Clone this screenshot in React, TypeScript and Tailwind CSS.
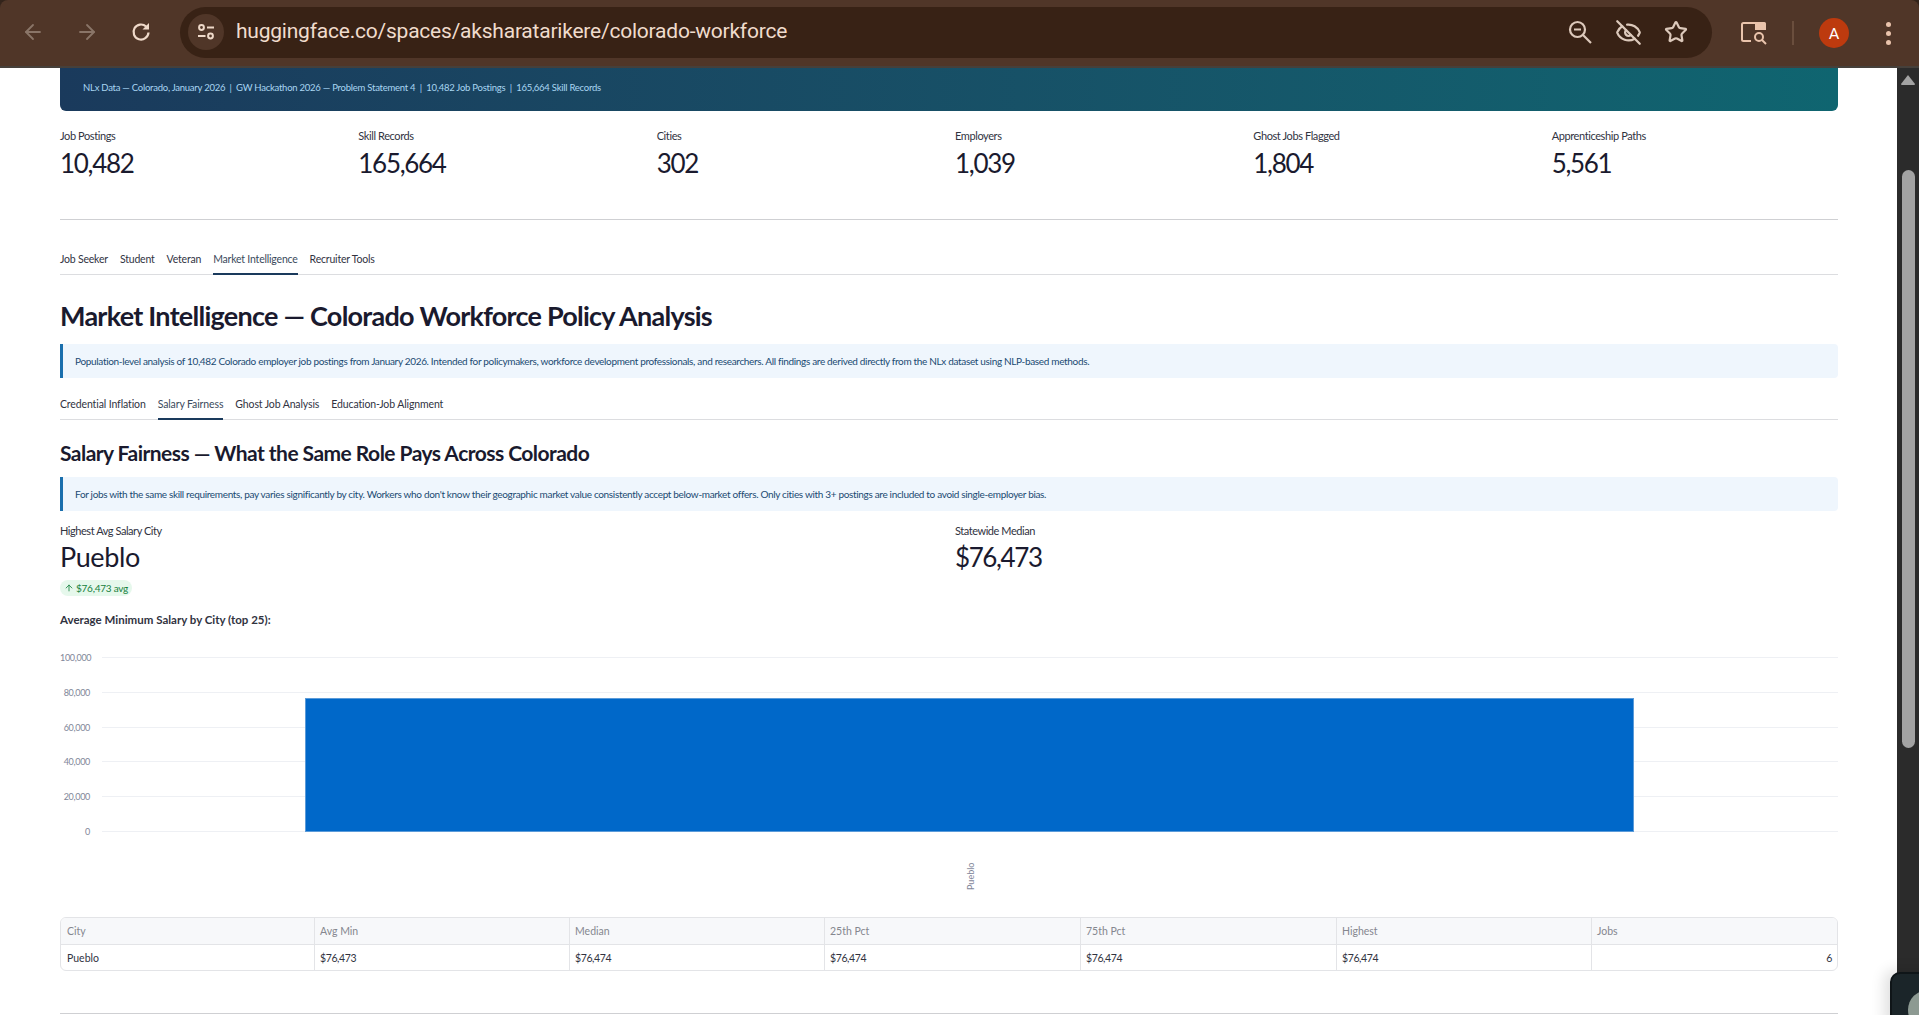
import { ArrowLeft, ArrowRight, EyeOff, Star, ArrowUp } from "lucide-react";

const stats = [
  ["Job Postings", "10,482"],
  ["Skill Records", "165,664"],
  ["Cities", "302"],
  ["Employers", "1,039"],
  ["Ghost Jobs Flagged", "1,804"],
  ["Apprenticeship Paths", "5,561"],
];
const ticks = ["100,000", "80,000", "60,000", "40,000", "20,000", "0"];
const heads = ["City", "Avg Min", "Median", "25th Pct", "75th Pct", "Highest", "Jobs"];
const cells = ["Pueblo", "$76,473", "$76,474", "$76,474", "$76,474", "$76,474", "6"];

function Tabs({ items, active, tracking }: { items: string[]; active: number; tracking: string }) {
  return (
    <div className="flex gap-[12px] border-b border-[#dcdde0] h-[33px]">
      {items.map((t, i) => (
        <div
          key={t}
          className={
            "h-[33px] flex items-center text-[10.5px] " + tracking + " " +
            (i === active ? "border-b-2 border-[#1a3a5c] text-[#3b4a5c] pt-[4px]" : "text-[#31333f] pt-[2px]")
          }
        >
          {t}
        </div>
      ))}
    </div>
  );
}

function Info({ children, className }: { children: string; className: string }) {
  return (
    <div className={"h-[34px] flex items-center bg-[#eff6fd] border-l-[3px] border-[#1a6fad] rounded-r-[4px] pl-[12px] text-[10px] tracking-[-0.33px] text-[#1a4a72] " + className}>
      {children}
    </div>
  );
}

export default function App() {
  return (
    <div className="h-[1015px] w-full overflow-hidden bg-white flex flex-col relative" style={{ fontFamily: '"Lato", sans-serif' }}>
      <div className="bg-[#33241b] shrink-0">
        <header className="h-[68px] bg-[#503628] border-b-2 border-[#46403b] flex items-center rounded-t-[8px]">
          <div className="w-[180px] pl-[21px] flex items-center gap-[30px] pb-[2px]">
            <ArrowLeft size={24} strokeWidth={1.8} className="text-[#8a7568]" />
            <ArrowRight size={24} strokeWidth={1.8} className="text-[#8a7568]" />
            <svg width="24" height="24" viewBox="0 0 24 24" fill="none">
              <path d="M19.5 12.5a7.5 7.5 0 1 1-2.4-6" stroke="#efd9c9" strokeWidth="2.2" />
              <path d="M20 3v6.5h-6.5z" fill="#efd9c9" />
            </svg>
          </div>
          <div className="w-[1532px] h-[51px] mb-[2px] rounded-[26px] bg-[#382215] flex items-center pl-[8px] pr-[24px]">
            <div className="w-[36px] h-[36px] rounded-full bg-[#503628] flex items-center justify-center">
              <svg width="20" height="20" viewBox="0 0 20 20" fill="none" stroke="#efd9c9" strokeWidth="2">
                <circle cx="5.5" cy="5.5" r="2.4" />
                <path d="M11 5.5h7M2 14h7.5" />
                <circle cx="14.5" cy="14" r="2.4" />
              </svg>
            </div>
            <span className="ml-[12px] text-[21px] tracking-[-0.22px] text-[#f0dccd]" style={{ fontFamily: '"Roboto", sans-serif' }}>
              huggingface.co/spaces/aksharatarikere/colorado-workforce
            </span>
            <div className="ml-auto flex items-center gap-[22px] text-[#dcc9bb]">
              <svg width="26" height="26" viewBox="0 0 26 26" fill="none" stroke="currentColor" strokeWidth="2.2">
                <circle cx="10.5" cy="10.5" r="7.5" />
                <path d="M7 10.5h7M16 16l8 8" />
              </svg>
              <EyeOff size={27} strokeWidth={2} />
              <Star size={24} strokeWidth={2.2} />
            </div>
          </div>
          <div className="flex items-center ml-[29px]">
            <svg width="26" height="24" viewBox="0 0 26 24" fill="none">
              <path d="M10 20H2.5A1.5 1.5 0 0 1 1 18.5v-15A1.5 1.5 0 0 1 2.5 2H14" stroke="#eac4ac" strokeWidth="2" />
              <path d="M14 1h9.5A1.5 1.5 0 0 1 25 2.5V9H14z" fill="#eac4ac" />
              <circle cx="18" cy="16" r="4" stroke="#eac4ac" strokeWidth="2" />
              <path d="M21 19l4 4" stroke="#eac4ac" strokeWidth="2" />
            </svg>
            <div className="ml-[25px] w-[2px] h-[24px] bg-[#6a4e3d]" />
            <div className="ml-[25px] w-[30px] h-[30px] rounded-full bg-[#bd3a0e] text-white text-[15px] flex items-center justify-center">A</div>
            <div className="ml-[37px] flex flex-col gap-[4px]">
              <div className="w-[5px] h-[5px] rounded-full bg-[#eac4ac]" />
              <div className="w-[5px] h-[5px] rounded-full bg-[#eac4ac]" />
              <div className="w-[5px] h-[5px] rounded-full bg-[#eac4ac]" />
            </div>
          </div>
        </header>
      </div>

      <div className="flex flex-1 min-h-0">
        <main className="flex-1 min-w-0 pl-[60px] pr-[59px]">
          <div className="h-[43px] rounded-b-[6px] bg-gradient-to-r from-[#1a3a5c] to-[#0f6570] flex items-center pl-[23px] text-[9.5px] tracking-[-0.25px] text-[#a9d6f2] pb-[2px]">
            NLx Data — Colorado, January 2026&nbsp;&nbsp;|&nbsp;&nbsp;GW Hackathon 2026 — Problem Statement 4&nbsp;&nbsp;|&nbsp;&nbsp;10,482 Job Postings&nbsp;&nbsp;|&nbsp;&nbsp;165,664 Skill Records
          </div>

          <div className="grid grid-cols-6 gap-[16px] mt-[18px] pr-[4px]">
            {stats.map(([l, v]) => (
              <div key={l}>
                <div className="h-[13px] leading-[13px] text-[11px] tracking-[-0.4px] text-[#31333f]">{l}</div>
                <div className="mt-[4px] h-[34px] leading-[34px] text-[26px] tracking-[-1.3px] text-[#1a1a2e]">{v}</div>
              </div>
            ))}
          </div>

          <div className="h-px bg-[#cfd0d3] mt-[39px]" />

          <div className="mt-[22px]">
            <Tabs tracking="tracking-[-0.2px]" items={["Job Seeker", "Student", "Veteran", "Market Intelligence", "Recruiter Tools"]} active={3} />
          </div>

          <h1 className="mt-[22px] h-[38px] leading-[38px] text-[27px] font-bold tracking-[-0.75px] text-[#1a1a2e]">
            Market Intelligence — Colorado Workforce Policy Analysis
          </h1>

          <Info className="mt-[9px]">Population-level analysis of 10,482 Colorado employer job postings from January 2026. Intended for policymakers, workforce development professionals, and researchers. All findings are derived directly from the NLx dataset using NLP-based methods.</Info>

          <div className="mt-[9px]">
            <Tabs tracking="tracking-[-0.12px]" items={["Credential Inflation", "Salary Fairness", "Ghost Job Analysis", "Education-Job Alignment"]} active={1} />
          </div>

          <h2 className="mt-[17px] h-[32px] leading-[32px] text-[21px] font-bold tracking-[-0.54px] text-[#1a1a2e]">
            Salary Fairness — What the Same Role Pays Across Colorado
          </h2>

          <Info className="mt-[8px]">For jobs with the same skill requirements, pay varies significantly by city. Workers who don't know their geographic market value consistently accept below-market offers. Only cities with 3+ postings are included to avoid single-employer bias.</Info>

          <div className="grid grid-cols-2 gap-[16px] mt-[13px] pr-[4px]">
            <div>
              <div className="h-[14px] leading-[14px] text-[11px] tracking-[-0.45px] text-[#31333f]">Highest Avg Salary City</div>
              <div className="mt-[2px] h-[34px] leading-[34px] text-[27px] tracking-[-0.4px] text-[#1a1a2e]">Pueblo</div>
              <div className="mt-[6px] flex w-fit items-center h-[16px] rounded-full bg-[#e6f8ec] px-[4px] text-[10px] tracking-[-0.25px] text-[#15803d]">
                <ArrowUp size={10} strokeWidth={2} className="mr-[2px]" />$76,473 avg
              </div>
            </div>
            <div>
              <div className="h-[14px] leading-[14px] text-[11px] tracking-[-0.45px] text-[#31333f]">Statewide Median</div>
              <div className="mt-[2px] h-[34px] leading-[34px] text-[26px] tracking-[-1.4px] text-[#1a1a2e]">$76,473</div>
            </div>
          </div>

          <div className="mt-[16px] h-[16px] leading-[16px] text-[11.5px] font-bold text-[#31333f]">
            Average Minimum Salary by City (top 25):
          </div>

          <div className="mt-[29px] flex">
            <div className="w-[30px] h-[175px] flex flex-col justify-between text-right text-[9px] tracking-[-0.3px] leading-[1px] text-[#7f8699]">
              {ticks.map((t) => (
                <div key={t} className="h-px">{t}</div>
              ))}
            </div>
            <div className="flex-1 ml-[12px] h-[175px] flex flex-col justify-between relative">
              {ticks.map((t) => (
                <div key={t} className="h-px bg-[#eef0f4]" />
              ))}
              <div className="absolute left-[203px] w-[1329px] top-[41px] bottom-0 bg-[#0068c9] border border-[#5b9bd9]" />
            </div>
          </div>
          <div className="h-[61px] flex justify-center pl-[42px]">
            <div className="mt-[32px] text-[9px] leading-[9px] text-[#7f8699] [writing-mode:vertical-rl] rotate-180 h-[26px] text-center">Pueblo</div>
          </div>

          <div className="mt-[24px] grid grid-cols-[253px_255px_255px_256px_256px_255px_1fr] border border-[#e3e4e7] rounded-[6px] overflow-hidden h-[54px]">
            {heads.map((h, i) => (
              <div key={h} className={"h-[27px] flex items-center px-[5px] pt-[2px] bg-[#f7f8fa] border-b border-[#e3e4e7] text-[10.5px] text-[#85878f] " + (i ? "border-l" : "pl-[6px]")}>
                {h}
              </div>
            ))}
            {cells.map((c, i) => (
              <div key={i} className={"h-[27px] flex items-center px-[5px] text-[10.5px] text-[#31333f] " + (i ? "border-l border-[#e3e4e7] tracking-[-0.4px] " : "pl-[6px] ") + (i === 6 ? "justify-end" : "")}>
                {c}
              </div>
            ))}
          </div>

          <div className="h-px bg-[#cfd0d3] mt-[42px]" />
        </main>

        <aside className="w-[22px] shrink-0 bg-[#2b2b2b] flex flex-col items-center">
          <svg width="16" height="12" viewBox="0 0 16 12" className="mt-[6px]">
            <path d="M8 1l7 9a1 1 0 0 1-1 1H2a1 1 0 0 1-1-1z" fill="#a3a3a3" />
          </svg>
          <div className="mt-[84px] w-[13px] h-[578px] rounded-full bg-[#a3a3a3]" />
        </aside>
      </div>

      <div className="absolute left-[1890px] top-[972px] w-[60px] h-[60px] rounded-[10px] bg-[#1b2529] border-2 border-[#0f1518] shadow-[-6px_-2px_14px_rgba(0,0,0,0.12)] p-[4px]">
        <div className="mt-[12px] ml-[12px] w-[40px] h-[40px] rounded-full bg-[#8d9a92]" />
      </div>
    </div>
  );
}
